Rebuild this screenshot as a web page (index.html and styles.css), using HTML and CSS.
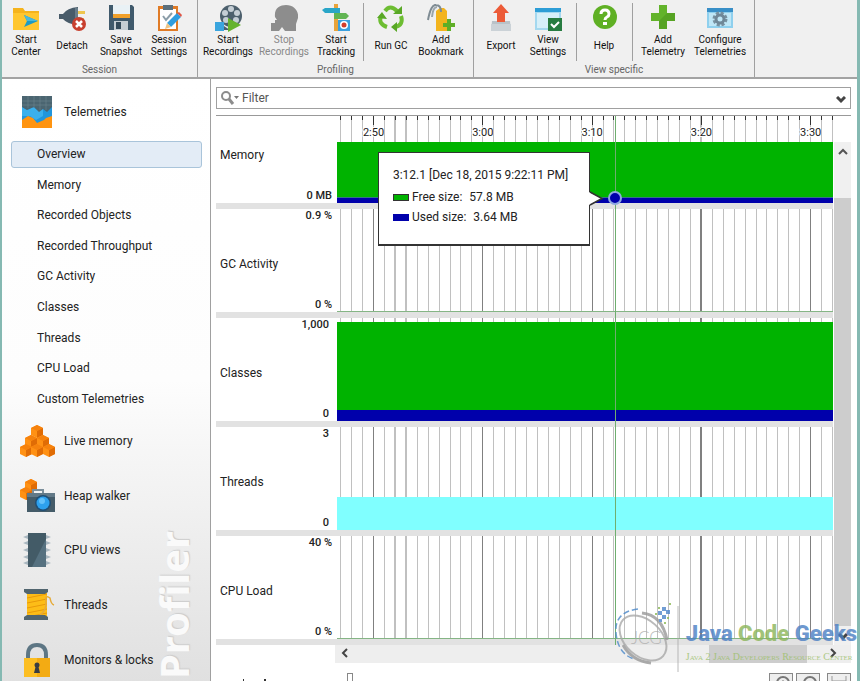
FILE: index.html
```html
<!DOCTYPE html>
<html lang="en">
<head>
    <meta charset="UTF-8">
    <meta name="viewport" content="width=device-width, initial-scale=1.0">
    <title>Profiler - Telemetries</title>
    <link rel="stylesheet" href="styles.css">
</head>
<body>
    <div class="window">
        <div class="toolbar">
            <div class="group session">
                <div class="sets">
                    <div class="set">
                        <button>
                            <svg width="28" height="28" viewBox="0 0 28 28"><path d="M1 4h10l2 3h14v19H1z" fill="#f5b31c"/><path d="M1 9h26v17H1z" fill="#ffc62e"/><path d="M12 11l14 6-14 6 3-6z" fill="#1d9ac4"/><path d="M12 11l14 6H15z" fill="#48b9dc"/></svg>
                            <span>Start<br>Center</span>
                        </button>
                        <button>
                            <svg width="28" height="28" viewBox="0 0 28 28"><path d="M20 7h7v3h-7zM20 14h6v3h-6z" fill="#eec64e"/><path d="M1 10h4q4-6 15-7v18Q9 20 5 15H1z" fill="#485b69"/><path d="M17 4h3v17h-3z" fill="#687d8a"/><circle cx="21" cy="20" r="7" fill="#c8402f"/><path d="M18 17l6 6m0-6l-6 6" stroke="#fff" stroke-width="2.5"/></svg>
                            <span>Detach</span>
                        </button>
                        <button>
                            <svg width="28" height="28" viewBox="0 0 28 28"><path d="M2 1h23l2 2v23H2z" fill="#405a6c"/><path d="M6 1h17v13H6z" fill="#e9f1f5"/><path d="M6 10h17v4H6z" fill="#f0a02a"/><path d="M7 17h14v9H7z" fill="#c5ced4"/><path d="M9 18h5v7H9z" fill="#344b5b"/></svg>
                            <span>Save<br>Snapshot</span>
                        </button>
                        <button>
                            <svg width="28" height="28" viewBox="0 0 28 28"><path d="M3 2h20v25H3z" fill="#e07b26"/><path d="M5 5h16v20H5z" fill="#fff"/><path d="M8 1h10v5H8z" fill="#5c707c"/><path d="M8 12l3 4 6-7" fill="none" stroke="#8b9da8" stroke-width="2"/><path d="M12 19L22 9l4 4-10 10z" fill="#2f9ee0"/><path d="M22 9l2-1 3 3-1 2z" fill="#e05545"/><path d="M12 19l4 4-6 2z" fill="#edc486"/></svg>
                            <span>Session<br>Settings</span>
                        </button>
                    </div>
                </div>
                <div class="group-label">Session</div>
            </div>

            <div class="group profiling">
                <div class="sets">
                    <div class="set recording">
                        <button>
                            <svg width="28" height="28" viewBox="0 0 28 28"><path d="M10 22l-6-2v6h12z" fill="#4d606d"/><circle cx="17" cy="12" r="11" fill="#4d606d"/><g fill="#c5ced5"><circle cx="17" cy="5" r="3"/><circle cx="11" cy="9" r="3"/><circle cx="23" cy="9" r="3"/><circle cx="12" cy="16" r="3"/><circle cx="22" cy="16" r="3"/></g><path d="M1 18h9v9H1z" fill="#3aa5de"/><path d="M14 14l13 7-13 7z" fill="#65b32e"/></svg>
                            <span>Start<br>Recordings</span>
                        </button>
                        <button disabled>
                            <svg width="28" height="28" viewBox="0 0 28 28"><path d="M5 13C4 4 10 1 16 1c8 0 13 6 12 13l-2 6v7H15l-3-4-3 4H1v-8h4v-3h2z" fill="#8d8d8d"/></svg>
                            <span>Stop<br>Recordings</span>
                        </button>
                        <button>
                            <svg width="28" height="28" viewBox="0 0 28 28"><path d="M12 0h4v27h-4z" fill="#e9a43a"/><path d="M3 4h15v5H3L0 6z" fill="#2aa6c8"/><path d="M12 9h12l3 3-3 3H12z" fill="#62b553"/><path d="M16 16h12v11H16z" fill="#3aa0df"/><circle cx="22" cy="21" r="4" fill="#fff"/><circle cx="22" cy="21" r="2.5" fill="#d13d2b"/></svg>
                            <span>Start<br>Tracking</span>
                        </button>
                    </div>
                    <div class="set">
                        <button>
                            <svg width="28" height="28" viewBox="0 0 28 28"><g fill="none" stroke="#6dbd32" stroke-width="4"><path d="M8 7Q13 0 20 7"/><path d="M24 12q3 9-6 11"/><path d="M10 23Q1 20 4 12"/></g><path d="M16 10h9V2zM20 18v10l-6-5zM0 14l5-6 5 7z" fill="#59a826"/></svg>
                            <span>Run GC</span>
                        </button>
                        <button>
                            <svg width="28" height="28" viewBox="0 0 28 28"><path d="M9 7l4-3h4l3 3v20H9z" fill="#f3b41d"/><path d="M1 16Q4 0 9 1q5 0 5 7" fill="none" stroke="#7f8c94" stroke-width="2"/><path d="M5 13Q6 3 10 3" fill="none" stroke="#9aa5ac" stroke-width="2"/><path d="M20 15h4v4h4v4h-4v4h-4v-4h-4v-4h4z" fill="#5fae27"/></svg>
                            <span>Add<br>Bookmark</span>
                        </button>
                    </div>
                </div>
                <div class="group-label">Profiling</div>
            </div>

            <div class="group view">
                <div class="sets">
                    <div class="set export">
                        <button>
                            <svg width="28" height="28" viewBox="0 0 28 28"><path d="M5 17h18l1 10H4z" fill="#b9c2c8"/><path d="M4 20h20v7H4z" fill="#cbd2d7"/><path d="M14 0l8 9h-4v9h-8V9H6z" fill="#ec5b38"/></svg>
                            <span>Export</span>
                        </button>
                        <button>
                            <svg width="28" height="28" viewBox="0 0 28 28"><path d="M1 4h26v22H1z" fill="#a4d8ef"/><path d="M1 4h26v4H1z" fill="#2d9dd6"/><path d="M3 9h22v15H3z" fill="#d6eff9"/><path d="M14 14h14v13H14z" fill="#277c41"/><path d="M17 20l3 3 5-5" fill="none" stroke="#fff" stroke-width="2"/></svg>
                            <span>View<br>Settings</span>
                        </button>
                    </div>
                    <div class="set help">
                        <button>
                            <svg width="28" height="28" viewBox="0 0 28 28"><circle cx="15" cy="13" r="12" fill="#5fb024"/><path d="M11 10q0-4 4-4t4 4q0 2-2 3t-2 3" fill="none" stroke="#fff" stroke-width="3"/><path d="M13 18h4v3h-4z" fill="#fff"/></svg>
                            <span>Help</span>
                        </button>
                    </div>
                    <div class="set telemetry">
                        <button>
                            <svg width="28" height="28" viewBox="0 0 28 28"><path d="M10 1h8v8h8v8h-8v8h-8v-8H2V9h8z" fill="#62b32a"/><path d="M18 9h8v8h-8v8h-8v-8z" fill="#56a323"/></svg>
                            <span>Add<br>Telemetry</span>
                        </button>
                        <button>
                            <svg width="28" height="28" viewBox="0 0 28 28"><path d="M1 4h26v20H1z" fill="#8fd0ee"/><path d="M1 4h26v4H1z" fill="#398fc7"/><path d="M3 9h22v13H3z" fill="#bfe6f6"/><circle cx="14" cy="15" r="6" fill="none" stroke="#77909f" stroke-width="3" stroke-dasharray="3 1.7"/><circle cx="14" cy="15" r="4" fill="none" stroke="#6f8797" stroke-width="3"/></svg>
                            <span>Configure<br>Telemetries</span>
                        </button>
                    </div>
                </div>
                <div class="group-label">View specific</div>
            </div>
        </div>

        <div class="main">
            <nav class="sidebar">
                <div class="watermark">Profiler</div>
                <a class="section first" href="#">
                    <svg width="34" height="34" viewBox="0 0 34 34"><path d="M2 1h30v32H2z" fill="#ff9410"/><path d="M2 1h30v20l-6 2-2 2-7 3-4-5-5-2-6 4z" fill="#2196dc"/><path d="M2 12l5 3 6-3 6 4 4-3v8l-7 4-6-4-8 0z" fill="#3ab0ed"/><path d="M2 1h30v11l-5 5-4-3-4 3-5-5-7 3-5-3z" fill="#4b6571"/><path d="M2 6h30M2 10h30M8 1v12M14 1v12M20 1v14M26 1v14" stroke="#6b838e" stroke-width=".6"/></svg>
                    Telemetries
                </a>
                <div class="views">
                    <a class="active" href="#">Overview</a>
                    <a href="#">Memory</a>
                    <a href="#">Recorded Objects</a>
                    <a href="#">Recorded Throughput</a>
                    <a href="#">GC Activity</a>
                    <a href="#">Classes</a>
                    <a href="#">Threads</a>
                    <a href="#">CPU Load</a>
                    <a href="#">Custom Telemetries</a>
                </div>
                <div class="sections">
                    <a class="section" href="#">
                        <svg width="34" height="34" viewBox="0 0 34 34"><defs><g id="cube"><path d="M0 3l6-3 6 3v7l-6 3-6-3z" fill="#ff9114"/><path d="M6 6l6-3v7l-6 3z" fill="#e06c05"/><path d="M0 3l6-3 6 3-6 3z" fill="#f6820d"/></g></defs><use href="#cube" x="11" y="1"/><use href="#cube" x="5" y="11"/><use href="#cube" x="17" y="11"/><use href="#cube" x="0" y="20"/><use href="#cube" x="11" y="20"/><use href="#cube" x="23" y="20"/></svg>
                        Live memory
                    </a>
                    <a class="section" href="#">
                        <svg width="34" height="34" viewBox="0 0 34 34"><use href="#cube" x="5" y="0"/><use href="#cube" x="0" y="8"/><path d="M13 14v-3h10v3" fill="none" stroke="#7b8f9b" stroke-width="2"/><path d="M7 14h28v19H7z" fill="#455c69"/><path d="M7 14h28v4H7z" fill="#627987"/><circle cx="23" cy="24" r="8" fill="#1f4f76"/><circle cx="23" cy="24" r="6.500" fill="#2da1ee"/><circle cx="22" cy="22" r="3" fill="#63c1fa"/></svg>
                        Heap walker
                    </a>
                    <a class="section" href="#">
                        <svg width="34" height="34" viewBox="0 0 34 34"><path d="M3 4l5-2v4zM3 10l5-2v4zM3 17l5-2v4zM3 24l5-2v4zM3 30l5-2v4zM31 4l-5-2v4zM31 10l-5-2v4zM31 17l-5-2v4zM31 24l-5-2v4zM31 30l-5-2v4z" fill="#a9b7c0"/><path d="M8 0h18v34H8z" fill="#435b67"/><path d="M26 6v28H12z" fill="#567180"/></svg>
                        CPU views
                    </a>
                    <a class="section" href="#">
                        <svg width="34" height="34" viewBox="0 0 34 34"><path d="M7 5h20v24H7z" fill="#fdbd17"/><path d="M7 10l20-4M7 15l20-4M7 20l20-4M7 25l20-4M7 29l20-4" stroke="#e99a0a"/><path d="M19 28q8-6 7-14t4-4q1 6 4 7" fill="none" stroke="#e6ab39" stroke-width="1.500"/><path d="M4 1h24v3l-3 2H7L4 4zM4 32h24v-3l-3-2H7l-3 2z" fill="#51656f"/></svg>
                        Threads
                    </a>
                    <a class="section" href="#">
                        <svg width="34" height="34" viewBox="0 0 34 34"><path d="M8 16v-4q0-10 9-10t9 10v4" fill="none" stroke="#5d7684" stroke-width="4"/><path d="M4 15h26v19H4z" fill="#fcbe22"/><path d="M17 15h13v19H17z" fill="#f3ab13"/><circle cx="17" cy="22" r="2.500" fill="#383d42"/><path d="M16 22h2l2 8h-6z" fill="#383d42"/></svg>
                        Monitors &amp; locks
                    </a>
                </div>
            </nav>

            <div class="content">
                <div class="filter">
                    <svg width="20" height="16" viewBox="0 0 20 16"><circle cx="6" cy="6" r="4" fill="none" stroke="#8c8c8c" stroke-width="2"/><path d="M9 9l4 5" stroke="#8c8c8c" stroke-width="3"/><path d="M14 6h5l-2.500 3z" fill="#777"/></svg>
                    <input type="text" placeholder="Filter" aria-label="Filter">
                    <button aria-label="Filter history"><svg width="10" height="8" viewBox="0 0 10 8"><path d="M1 1l4 4 4-4" fill="none" stroke="#444" stroke-width="3"/></svg></button>
                </div>

                <div class="chart">
                    <div class="axis"><div class="plot"><svg class="grid ticks"></svg></div></div>
                    <div class="rows">
                        <div class="row scrolled">
                            <div class="name">Memory</div>
                            <div class="values"><span>0 MB</span></div>
                            <div class="plot"><div class="free"></div><div class="used thin"></div></div>
                        </div>
                        <div class="row">
                            <div class="name">GC Activity</div>
                            <div class="values"><span>0.9 %</span><span>0 %</span></div>
                            <div class="plot baseline"><svg class="grid"></svg></div>
                        </div>
                        <div class="row">
                            <div class="name">Classes</div>
                            <div class="values plain"><span>1,000</span><span>0</span></div>
                            <div class="plot"><svg class="grid"></svg><div class="free"></div><div class="used"></div></div>
                        </div>
                        <div class="row">
                            <div class="name">Threads</div>
                            <div class="values plain"><span>3</span><span>0</span></div>
                            <div class="plot"><svg class="grid"></svg><div class="runnable"></div></div>
                        </div>
                        <div class="row">
                            <div class="name">CPU Load</div>
                            <div class="values"><span>40 %</span><span>0 %</span></div>
                            <div class="plot baseline"><svg class="grid"></svg></div>
                        </div>
                    </div>
                    <div class="vscroll">
                        <button aria-label="Scroll up"><svg width="10" height="8" viewBox="0 0 10 8"><path d="M1 6l4-4 4 4" fill="none" stroke="#555" stroke-width="2"/></svg></button>
                        <div class="thumb"></div>
                        <button aria-label="Scroll down"><svg width="10" height="8" viewBox="0 0 10 8"><path d="M1 2l4 4 4-4" fill="none" stroke="#444" stroke-width="3"/></svg></button>
                    </div>
                    <div class="overlay">
                        <div class="cursor"><div class="marker"></div></div>
                        <div class="tooltip">
                            <p>3:12.1 [Dec 18, 2015 9:22:11 PM]</p>
                            <p><i class="swatch green"></i>Free size: <b>57.8 MB</b></p>
                            <p><i class="swatch blue"></i>Used size: <b>3.64 MB</b></p>
                            <svg class="arrow" width="15" height="16" viewBox="0 0 15 16"><path d="M0 1l13 6.500L0 14z" fill="#fff"/><path d="M1 1l12 6.500L1 14" fill="none" stroke="#333" stroke-width="1.500"/></svg>
                        </div>
                    </div>
                </div>

                <div class="hscroll">
                    <button aria-label="Scroll left"><svg width="8" height="10" viewBox="0 0 8 10"><path d="M6 1L2 5l4 4" fill="none" stroke="#444" stroke-width="2"/></svg></button>
                    <div class="thumb"></div>
                    <button aria-label="Scroll right"><svg width="8" height="10" viewBox="0 0 8 10"><path d="M2 1l4 4-4 4" fill="none" stroke="#444" stroke-width="2"/></svg></button>
                </div>
                <div class="footer">
                    <svg class="marks" width="120" height="18" viewBox="0 0 120 18"><path d="M27 16h1v2h-1zM48 16h2v2h-2z" fill="#333"/></svg>
                    <div class="slider"></div>
                    <div class="zoom">
                        <button aria-label="Zoom in"><svg width="20" height="16" viewBox="0 0 20 16"><circle cx="12" cy="9" r="6" fill="none" stroke="#777" stroke-width="2"/><path d="M12 6v6M9 9h6" stroke="#777"/></svg></button>
                        <button aria-label="Zoom out"><svg width="20" height="16" viewBox="0 0 20 16"><circle cx="12" cy="9" r="6" fill="none" stroke="#777" stroke-width="2"/></svg></button>
                        <button aria-label="Fit"><svg width="20" height="16" viewBox="0 0 20 16"><path d="M3 2v10M17 2v10M3 7h14" fill="none" stroke="#999"/></svg></button>
                    </div>
                </div>
            </div>
        </div>

        <div class="brand">
            <svg width="66" height="72" viewBox="0 0 66 72">
                <ellipse cx="29" cy="36" rx="27" ry="18" transform="rotate(42 29 36)" fill="none" stroke="#a9a9a9" stroke-width="2"/>
                <path d="M28 11q20 2 25 27M9 43q9 16 28 18" fill="none" stroke="#999" stroke-width="3"/>
                <path d="M24 7Q0 10 2 31t18 26" fill="none" stroke="#4a88ca" stroke-width="1.500" stroke-dasharray="6 3"/>
                <path d="M48 5h4v4h-4zM52 8h4v4h-4zM44 9h4v4h-4zM48 13h4v4h-4zM45 17h3v3h-3z" fill="#4f87ca"/>
                <path d="M55 1h2v2h-2zM44 5h2v2h-2zM41 11h2v2h-2zM53 15h2v2h-2zM50 20h2v2h-2z" fill="#8cba55"/>
                <text x="17" y="42">JCG</text>
                <path d="M64 4v66" stroke="#aaa"/>
            </svg>
            <div class="brand-text">
                <div class="brand-name">Java <span>Code</span> Geeks</div>
                <div class="brand-sub">Java 2 Java Developers Resource Center</div>
            </div>
        </div>
    </div>

    <script>
        // visible time range in seconds
        const start = 166.66;
        const end = 212.04;

        function line(x, y2, cls) {
            return `<line x1="${x}%" x2="${x}%" y1="0" y2="${y2}" class="${cls}"/>`;
        }

        document.querySelectorAll('.grid').forEach(svg => {
            const ticks = svg.classList.contains('ticks');
            let html = '';
            for (let t = Math.ceil(start); t <= end; t++) {
                const x = (t - start) / (end - start) * 100;
                const major = t % 10 === 0;
                const heavy = t === 172 || t === 173 || t === 200;
                html += line(x, '100%', (major && !ticks ? 'major' : 'minor') + (heavy ? ' heavy' : ''));
                if (ticks) {
                    html += line(x, major ? 9 : 4, 'tick');
                }
                if (ticks && major) {
                    const label = Math.floor(t / 60) + ':' + String(t % 60).padStart(2, '0');
                    html += `<text x="${x}%" y="20">${label}</text>`;
                }
            }
            svg.innerHTML = html;
        });
    </script>
</body>
</html>
```
FILE: styles.css
```css
* {
    margin: 0;
    padding: 0;
    box-sizing: border-box;
}

body {
    background: #fff;
    color: #222;
    font-family: Roboto, "Open Sans", sans-serif;
    font-size: 12px;
}

button {
    border: none;
    background: none;
    font: inherit;
    color: inherit;
}

a {
    color: inherit;
    text-decoration: none;
}

.window {
    position: relative;
    display: flex;
    flex-direction: column;
    height: 100vh;
    border-left: 2px solid #85b9b2;
    border-right: 3px solid #85b9b2;
    overflow: hidden;
}

/* toolbar */
.toolbar {
    display: flex;
    flex: none;
    height: 79px;
    background: #f0f0f0;
    border-bottom: 2px solid #a3a3a3;
}

.group {
    display: flex;
    flex-direction: column;
    border-right: 1px solid #a0a0a0;
}

.sets {
    display: flex;
    height: 64px;
    padding: 3px 0 2px;
}

.set {
    display: grid;
    grid-auto-flow: column;
    padding: 0 2px;
    border-right: 1px solid #a0a0a0;
}

.set:last-child {
    border-right: none;
}

.session .set {
    grid-template-columns: 44px 48px 50px 46px;
    padding-right: 5px;
}

.profiling .set {
    grid-template-columns: 50px 50px;
    padding-right: 7px;
}

.profiling .recording {
    grid-template-columns: 56px 56px 48px;
    padding: 0 3px 0 2px;
}

.view .set {
    grid-template-columns: 48px 46px;
    padding: 0 5px 0 3px;
}

.view .help {
    grid-template-columns: 50px;
    padding: 0 3px 0 2px;
}

.view .telemetry {
    grid-template-columns: 54px 60px;
    padding: 0 4px 0 3px;
}

.set button {
    display: flex;
    flex-direction: column;
    align-items: center;
    font-size: 10px;
    line-height: 12px;
    color: #111;
    white-space: nowrap;
}

.set button svg {
    flex: none;
    margin-top: 1px;
}

.set button span {
    display: flex;
    align-items: center;
    height: 28px;
}

.set button:disabled {
    color: #888;
}

.group-label {
    text-align: center;
    font-size: 10px;
    line-height: 14px;
    color: #666;
}

/* sidebar */
.main {
    display: flex;
    flex: 1;
    min-height: 0;
}

.sidebar {
    position: relative;
    flex: none;
    width: 209px;
    border-right: 1px solid #a0a0a0;
    background: linear-gradient(#fff, #fdfdfd 50%, #e0e0e0);
    overflow: hidden;
}

.section {
    position: relative;
    display: flex;
    align-items: center;
    gap: 10px;
    padding-left: 18px;
}

.section svg {
    overflow: visible;
}

.first {
    height: 54px;
    margin-top: 6px;
}

.views {
    display: grid;
    grid-auto-rows: 1fr;
    height: 275px;
    padding: 0 8px 0 9px;
}

.views a {
    display: flex;
    align-items: center;
    margin: 2px 0;
    padding-left: 25px;
    border: 1px solid transparent;
    border-radius: 3px;
}

.views .active {
    background: #e3ecf6;
    border-color: #a9c4da;
}

.sections {
    display: grid;
    grid-auto-rows: 1fr;
    height: 273px;
}

.watermark {
    position: absolute;
    left: 148px;
    bottom: 2px;
    writing-mode: vertical-rl;
    transform: rotate(180deg);
    font-family: "Noto Sans", sans-serif;
    font-size: 40px;
    line-height: 48px;
    font-weight: bold;
    color: #fafafa;
    text-shadow: 1px 1px 1px #ccc;
}

/* telemetry view */
.content {
    display: flex;
    flex-direction: column;
    flex: 1;
    min-width: 0;
    padding: 8px 6px 0 5px;
}

.filter {
    display: flex;
    align-items: center;
    flex: none;
    height: 22px;
    padding: 0 3px;
    border: 1px solid #a0a0a0;
}

.filter input {
    flex: 1;
    margin-left: 2px;
    border: none;
    outline: none;
    font: inherit;
}

.filter input::placeholder {
    color: #555;
}

.filter button {
    padding: 3px 1px 0;
}

.chart {
    position: relative;
    display: grid;
    grid-template: 26px 1fr / 1fr 18px;
    flex: 1;
    min-height: 0;
    margin-top: 6px;
    border-top: 1px solid #999;
}

.axis {
    padding-left: 121px;
}

.rows {
    grid-area: 2 / 1;
    display: flex;
    flex-direction: column;
    justify-content: flex-end;
    min-height: 0;
    overflow: hidden;
}

.row {
    display: grid;
    grid-template-columns: 61px 60px 1fr;
    flex: none;
    height: 109px;
    border-bottom: 6px solid #e2e2e2;
}

.name {
    align-self: end;
    padding-left: 4px;
    margin-bottom: 40px;
    line-height: 16px;
    white-space: nowrap;
}

.values {
    display: flex;
    flex-direction: column;
    justify-content: space-between;
    padding-right: 5px;
    text-align: right;
    font-size: 11px;
    line-height: 14px;
    font-weight: 500;
}

.values.plain {
    padding-right: 8px;
}

/* the first row is partly scrolled out at the top */
.scrolled .values {
    justify-content: flex-end;
}

.scrolled .free {
    flex: 1;
}

.plot {
    position: relative;
    display: flex;
    flex-direction: column;
    justify-content: flex-end;
    height: 100%;
}

.baseline {
    border-bottom: 1px solid #85b585;
}

.grid {
    position: absolute;
    left: 0;
    top: 0;
    width: 100%;
    height: 100%;
    shape-rendering: crispEdges;
}

.grid .minor {
    stroke: #c0c0c0;
}

.grid .major {
    stroke: #808080;
}

.grid .heavy {
    stroke-width: 2px;
}

.grid .tick {
    stroke: #333;
}

.grid text {
    font-size: 11px;
    text-anchor: middle;
    fill: #222;
    paint-order: stroke;
    stroke: #fff;
    stroke-width: 2px;
}

.free,
.used,
.runnable {
    position: relative;
}

.free {
    height: 88px;
    background: #00b300;
}

.used {
    height: 11px;
    background: #0000ab;
}

.used.thin {
    height: 6px;
    border-top: 1px solid #36728a;
}

.runnable {
    height: 33px;
    background: #80ffff;
}

.vscroll {
    grid-area: 2 / 2;
    display: flex;
    flex-direction: column;
    background: #f0f0f0;
    border-left: 1px solid #fff;
}

.vscroll button {
    height: 19px;
}

.vscroll .thumb {
    flex: 1;
    margin-top: 37px;
    background: #cdcdcd;
}

.hscroll {
    display: flex;
    align-items: center;
    flex: none;
    height: 18px;
    margin-left: 119px;
    background: #eee;
}

.hscroll button {
    width: 20px;
}

.hscroll .thumb {
    width: 98px;
    height: 18px;
    margin: 0 16px 0 auto;
    background: #cdcdcd;
}

.hscroll button:last-child {
    margin-right: 8px;
}

/* cursor and tooltip over the chart */
.overlay {
    position: absolute;
    left: 121px;
    right: 18px;
    top: 0;
    bottom: 0;
}

.cursor {
    position: absolute;
    left: 56%;
    top: 0;
    bottom: 0;
    width: 1px;
    background: #6fae6f;
}

.marker {
    position: absolute;
    left: -7px;
    top: 75px;
    width: 14px;
    height: 14px;
    border: 2px solid #8fa8e0;
    border-radius: 50%;
    background: #0000ab;
}

.tooltip {
    position: absolute;
    right: 49%;
    top: 36px;
    width: 212px;
    padding: 12px 0 17px 14px;
    background: #fff;
    border: 1px solid #333;
    border-bottom-width: 2px;
    line-height: 20px;
    white-space: nowrap;
}

.tooltip p:first-child {
    margin-bottom: 2px;
}

.tooltip b {
    margin-left: 4px;
    font-weight: normal;
}

.swatch {
    display: inline-block;
    width: 16px;
    height: 7px;
    margin-right: 3px;
    border: 1px solid #333;
}

.green {
    background: #00b300;
}

.blue {
    background: #0000ab;
    border-color: #0000ab;
}

.arrow {
    position: absolute;
    left: 100%;
    top: 38px;
}

.footer {
    display: flex;
    align-items: flex-end;
    flex: none;
    height: 18px;
}

.slider {
    width: 6px;
    height: 8px;
    margin-left: 11px;
    border: 1px solid #888;
    border-bottom: none;
}

.zoom {
    display: flex;
    gap: 3px;
    height: 8px;
    margin-left: auto;
}

.zoom button {
    width: 24px;
    border: 1px solid #888;
    border-bottom: none;
    background: #eee;
    overflow: hidden;
}

.zoom button:last-child {
    margin-left: 4px;
}

/* site logo in the corner */
.brand {
    position: absolute;
    right: 0;
    bottom: 7px;
    display: flex;
    gap: 6px;
    opacity: .8;
    pointer-events: none;
}

.brand text {
    font-family: Lato, sans-serif;
    font-size: 17px;
    font-weight: 300;
    fill: #aaa;
}

.brand-text {
    padding-top: 14px;
    white-space: nowrap;
}

.brand-name {
    font-family: Roboto, sans-serif;
    font-size: 22px;
    line-height: 36px;
    font-weight: 900;
    color: #4a7fc4;
}

.brand-name span {
    color: #8ab55a;
}

.brand-sub {
    font-family: "Liberation Serif", serif;
    font-size: 10px;
    line-height: 10px;
    font-variant: small-caps;
    color: #9cc069;
}
```
